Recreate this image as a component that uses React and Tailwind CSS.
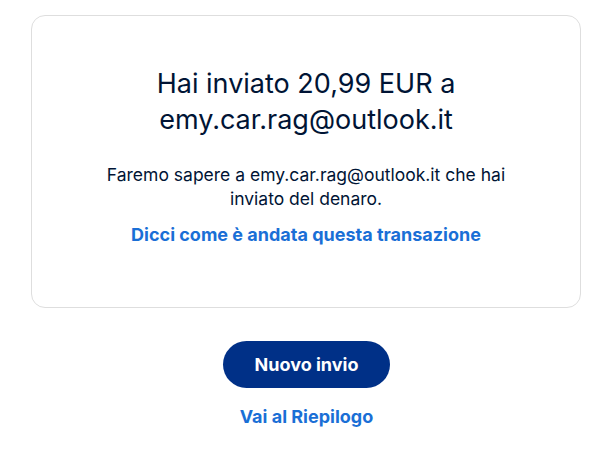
export default function App() {
  return (
    <div className="min-h-[463px] bg-white pt-[15px] font-['Inter',sans-serif] text-[#001435]">
      <div className="ml-[31px] w-[550px] rounded-[14px] border border-[#dedede] pt-[50px] pb-[60px] text-center">
        <h1 className="mx-auto w-[340px] text-[27px] leading-[36px] font-normal">
          Hai inviato 20,99 EUR a emy.car.rag@outlook.it
        </h1>
        <p className="mx-auto mt-[25px] w-[420px] text-[17.5px] leading-[24px]">
          Faremo sapere a emy.car.rag@outlook.it che hai inviato del denaro.
        </p>
        <a href="#" className="mt-[12px] block text-[18px] leading-[24px] font-bold text-[#1a6fd6]">
          Dicci come è andata questa transazione
        </a>
      </div>
      <div className="flex flex-col items-center pt-[33px]">
        <button className="h-[47px] w-[167px] rounded-full bg-[#003087] text-[18px] font-bold text-white">
          Nuovo invio
        </button>
        <a href="#" className="mt-[17px] text-[18px] leading-[24px] font-bold text-[#1a6fd6]">
          Vai al Riepilogo
        </a>
      </div>
    </div>
  )
}
